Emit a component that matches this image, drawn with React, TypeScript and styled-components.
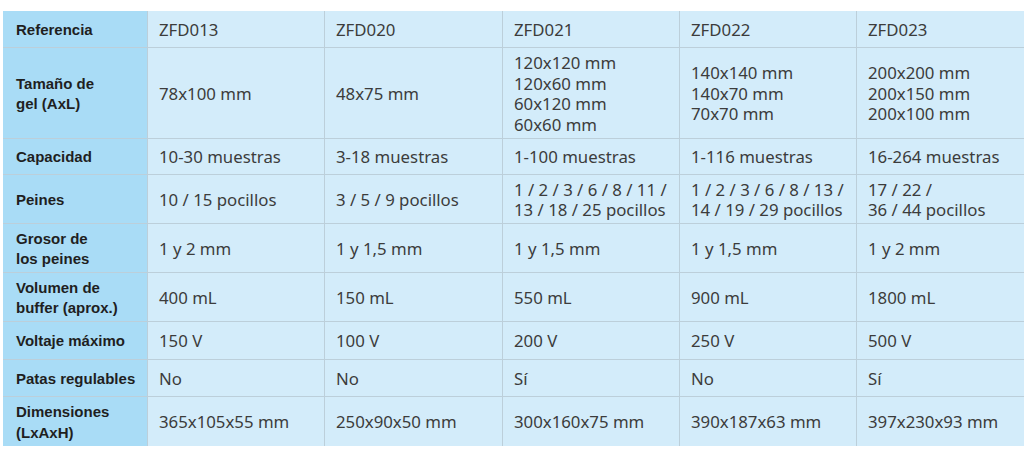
import * as React from 'react';
import styled, {createGlobalStyle} from 'styled-components';

const GlobalStyle = createGlobalStyle`
    html, body {
        margin: 0;
        padding: 0;
        background: #ffffff;
    }
`;

interface IRow {
    label: string;
    height: number;
    values: string[];
}

const rows: IRow[] = [
    {label: 'Referencia', height: 36, values: ['ZFD013', 'ZFD020', 'ZFD021', 'ZFD022', 'ZFD023']},
    {
        label: 'Tamaño de\ngel (AxL)',
        height: 90,
        values: [
            '78x100 mm',
            '48x75 mm',
            '120x120 mm\n120x60 mm\n60x120 mm\n60x60 mm',
            '140x140 mm\n140x70 mm\n70x70 mm',
            '200x200 mm\n200x150 mm\n200x100 mm',
        ],
    },
    {label: 'Capacidad', height: 35, values: ['10-30 muestras', '3-18 muestras', '1-100 muestras', '1-116 muestras', '16-264 muestras']},
    {
        label: 'Peines',
        height: 48,
        values: [
            '10 / 15 pocillos',
            '3 / 5 / 9 pocillos',
            '1 / 2 / 3 / 6 / 8 / 11 /\n13 / 18 / 25 pocillos',
            '1 / 2 / 3 / 6 / 8 / 13 /\n14 / 19 / 29 pocillos',
            '17 / 22 /\n36 / 44 pocillos',
        ],
    },
    {label: 'Grosor de\nlos peines', height: 48, values: ['1 y 2 mm', '1 y 1,5 mm', '1 y 1,5 mm', '1 y 1,5 mm', '1 y 2 mm']},
    {label: 'Volumen de\nbuffer (aprox.)', height: 48, values: ['400 mL', '150 mL', '550 mL', '900 mL', '1800 mL']},
    {label: 'Voltaje máximo', height: 37, values: ['150 V', '100 V', '200 V', '250 V', '500 V']},
    {label: 'Patas regulables', height: 36, values: ['No', 'No', 'Sí', 'No', 'Sí']},
    {label: 'Dimensiones\n(LxAxH)', height: 49, values: ['365x105x55 mm', '250x90x50 mm', '300x160x75 mm', '390x187x63 mm', '397x230x93 mm']},
];

const Table = styled.div<{$rows: string}>`
    display: grid;
    grid-template-columns: 144px 176px 177px 176px 176px 1fr;
    grid-template-rows: ${p => p.$rows};
    gap: 1px;
    margin: 11px 0 0 3px;
    background-color: #bccfda;
`;

const Cell = styled.div<{$label?: boolean}>`
    display: flex;
    align-items: center;
    padding: 2px 0 0 ${p => p.$label ? 13 : 11}px;
    background-color: ${p => p.$label ? '#a9dcf6' : '#d3ecfa'};
    color: ${p => p.$label ? '#1f1f1f' : '#3c3c3c'};
    font-family: ${p => p.$label
        ? '"Liberation Sans", Arial, sans-serif'
        : '"Noto Sans", "Liberation Sans", sans-serif'};
    font-size: ${p => p.$label ? 15 : 16.8}px;
    font-weight: ${p => p.$label ? 700 : 400};
    line-height: 20.5px;
    white-space: pre-line;
`;

export default function App() {
    const template = rows.map(r => `${r.height}px`).join(' ');

    return (
        <>
            <GlobalStyle />
            <Table $rows={template}>
                {rows.map(row => (
                    <React.Fragment key={row.label}>
                        <Cell $label>{row.label}</Cell>
                        {row.values.map((v, i) => (
                            <Cell key={i}>{v}</Cell>
                        ))}
                    </React.Fragment>
                ))}
            </Table>
        </>
    );
}
